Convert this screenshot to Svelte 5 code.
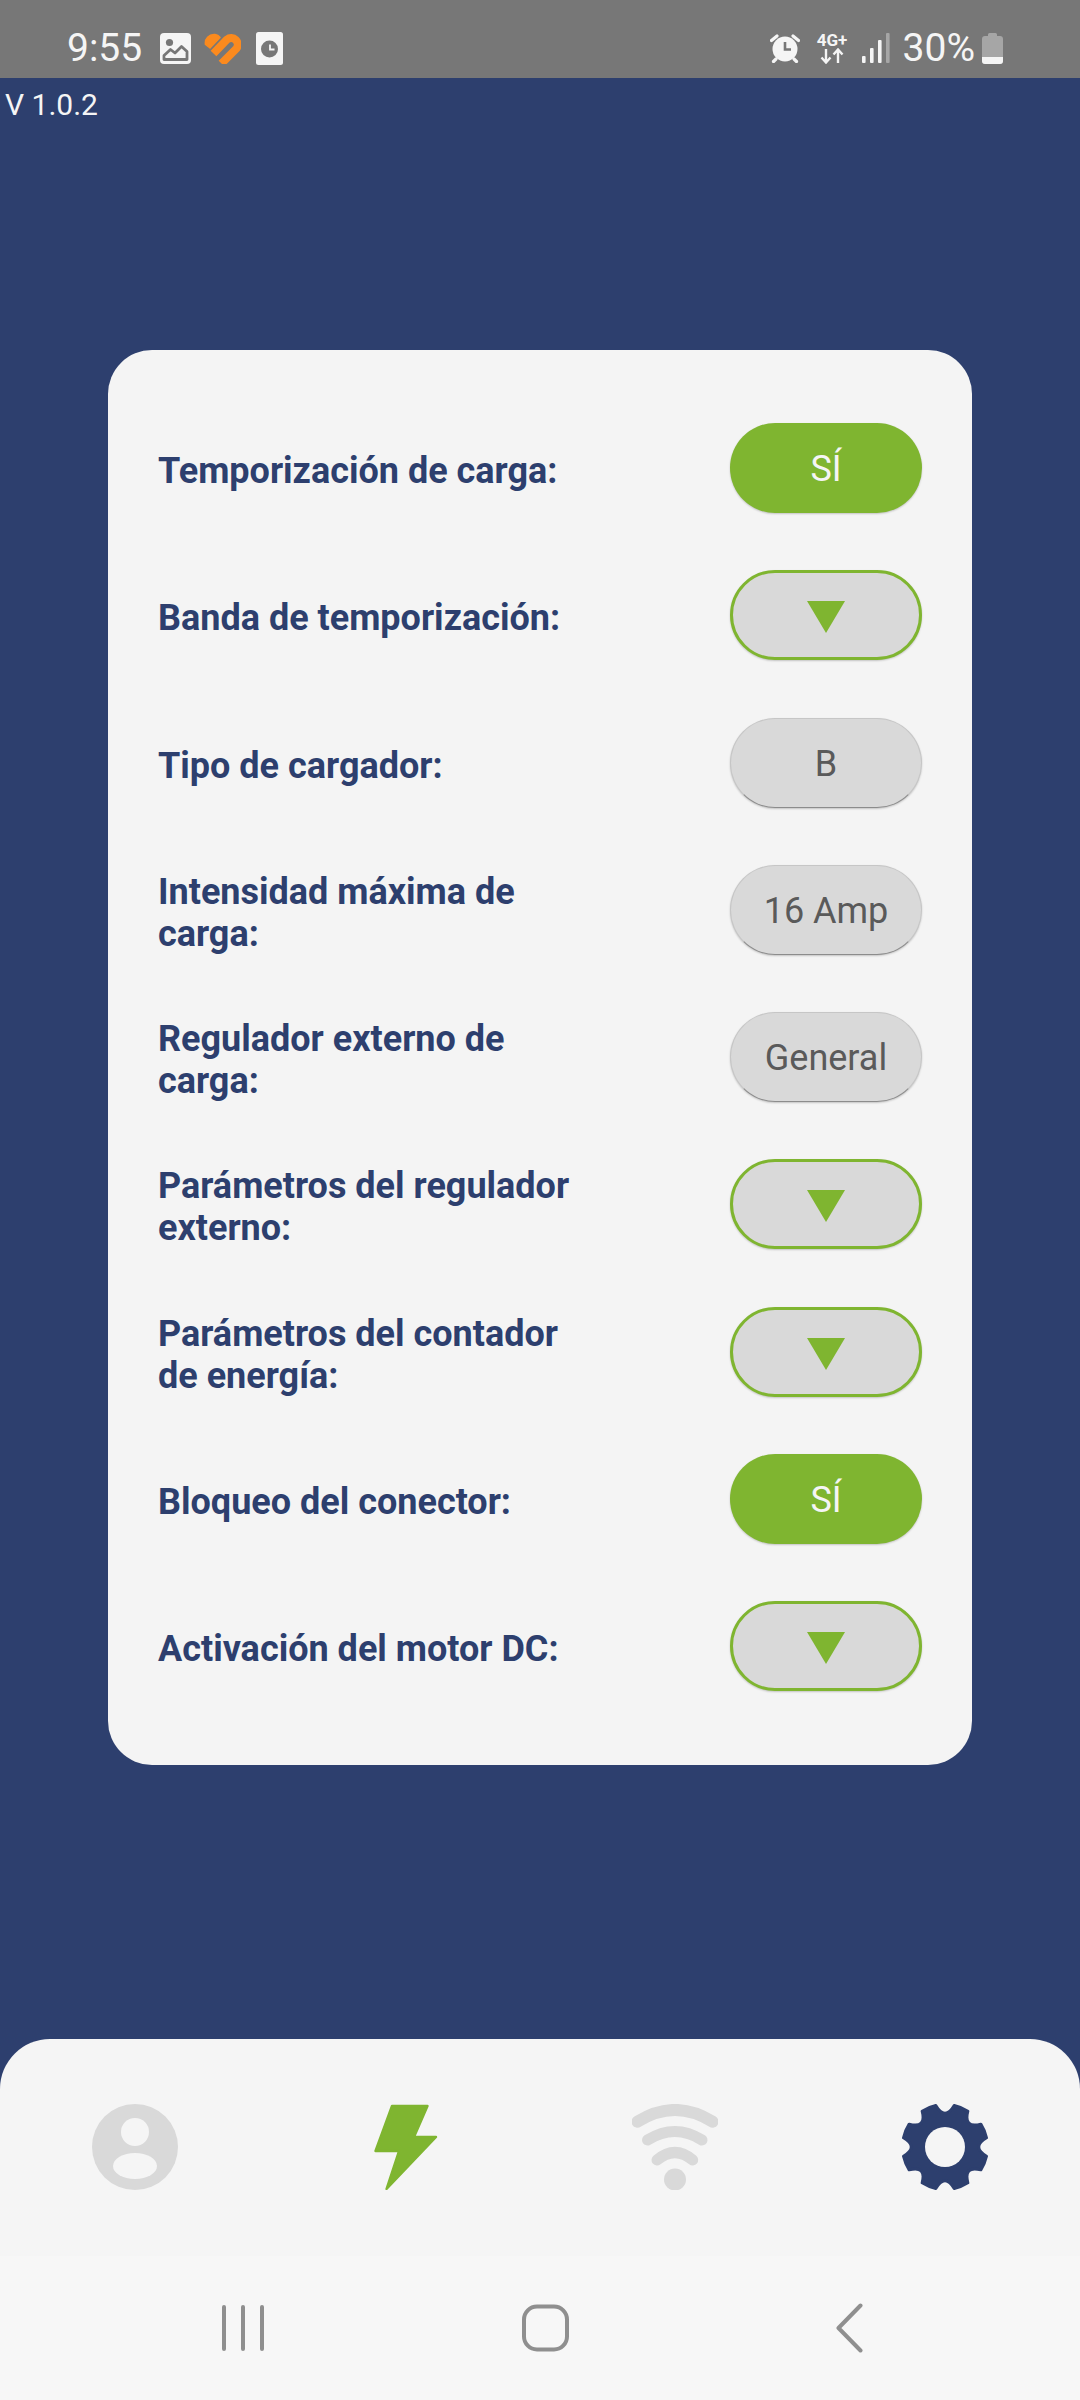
<script lang="ts">
  const rows = [
    { label: 'Temporización de carga:', kind: 'on', text: 'SÍ' },
    { label: 'Banda de temporización:', kind: 'drop' },
    { label: 'Tipo de cargador:', kind: 'off', text: 'B' },
    { label: 'Intensidad máxima de carga:', kind: 'off', text: '16 Amp' },
    { label: 'Regulador externo de carga:', kind: 'off', text: 'General' },
    { label: 'Parámetros del regulador externo:', kind: 'drop' },
    { label: 'Parámetros del contador de energía:', kind: 'drop' },
    { label: 'Bloqueo del conector:', kind: 'on', text: 'SÍ' },
    { label: 'Activación del motor DC:', kind: 'drop' }
  ]

  // 8 lobes, a quarter step off the axes
  function gearPath() {
    const c = 43, R = 42.5, root = 26
    const pt = (r: number, deg: number) => {
      const a = (deg * Math.PI) / 180
      return `${(c + r * Math.cos(a)).toFixed(2)} ${(c + r * Math.sin(a)).toFixed(2)}`
    }
    let d = ''
    for (let i = 0; i < 8; i++) {
      const a = 22.5 + i * 45
      d += `${i ? 'L' : 'M'}${pt(R, a - 10)} A${R} ${R} 0 0 1 ${pt(R, a + 10)} `
      d += `Q${pt(root, a + 22.5)} ${pt(R, a + 35)} `
    }
    return d + 'Z'
  }
  const gear = gearPath()
</script>

<div class="screen">
  <header class="status">
    <span class="time">9:55</span>
    <svg class="ic-image" width="31" height="31" viewBox="0 0 31 31">
      <rect width="31" height="31" rx="4" fill="#f5f5f5"/>
      <circle cx="9.500" cy="9.500" r="3.600" fill="#777"/>
      <path d="M4 26.500V22.500L10.500 16.500 15 20 21.500 13.500 27 18.500V26.500Z" fill="none" stroke="#777" stroke-width="2.800" stroke-linejoin="round"/>
    </svg>
    <svg class="ic-heart" width="37" height="31" viewBox="0 0 37 31">
      <path d="M1.500 11.500C0.500 6 5 1 11 1.500 13 1.700 15 3 16 4.500L6 15Z" fill="#fb8a1e" stroke="#fb8a1e" stroke-width="1.500" stroke-linejoin="round"/>
      <path d="M9.500 20.500L23 6.500A6.600 6.600 0 0 1 32.500 15.500L17.500 30.500" fill="none" stroke="#fb8a1e" stroke-width="8"/>
    </svg>
    <svg class="ic-file" width="27" height="33" viewBox="0 0 27 33">
      <rect width="27" height="33" rx="2.500" fill="#f5f5f5"/>
      <circle cx="13.500" cy="17" r="8.500" fill="#777"/>
      <path d="M14 12.500V17.500H18.500" fill="none" stroke="#f5f5f5" stroke-width="1.800"/>
    </svg>
    <span class="spacer"></span>
    <svg class="ic-alarm" width="30" height="30" viewBox="0 0 30 30">
      <circle cx="15" cy="16" r="12.500" fill="#f5f5f5"/>
      <path d="M15 9V16.500H21" fill="none" stroke="#777" stroke-width="2.600"/>
      <path d="M1.500 7.500L7 3 M28.500 7.500L23 3 M6 26L3.500 28.500 M24 26L26.500 28.500" stroke="#f5f5f5" stroke-width="3.200" stroke-linecap="round"/>
    </svg>
    <div class="net">
      <span class="net-label">4G+</span>
      <svg width="24" height="16" viewBox="0 0 24 16">
        <path d="M6 1V14 M1.500 9.500L6 14.500 10.500 9.500 M18 15V2 M13.500 6.500L18 1.500 22.500 6.500" fill="none" stroke="#f5f5f5" stroke-width="2.400"/>
      </svg>
    </div>
    <svg class="ic-signal" width="28" height="30" viewBox="0 0 28 30">
      <rect x="0" y="23" width="3.600" height="7" rx="1" fill="#f5f5f5"/>
      <rect x="8" y="15" width="3.600" height="15" rx="1" fill="#f5f5f5"/>
      <rect x="16" y="7" width="3.600" height="23" rx="1" fill="#f5f5f5"/>
      <rect x="24" y="0" width="3.600" height="30" rx="1" fill="#a6a6a6"/>
    </svg>
    <span class="pct">30%</span>
    <svg class="ic-battery" width="21" height="31" viewBox="0 0 21 31">
      <path d="M6 3V1.500Q6 0 7.500 0H13.500Q15 0 15 1.500V3H18Q21 3 21 6V28Q21 31 18 31H3Q0 31 0 28V6Q0 3 3 3Z" fill="#a6a6a6"/>
      <path d="M0 24H21V28Q21 31 18 31H3Q0 31 0 28Z" fill="#f5f5f5"/>
    </svg>
  </header>

  <main class="body">
    <div class="version">V 1.0.2</div>
    <section class="card">
      {#each rows as row}
        <div class="row">
          <span class="label">{row.label}</span>
          <div class="pill {row.kind}">
            {#if row.kind === 'drop'}
              <svg class="caret" width="38" height="32" viewBox="0 0 38 32"><path d="M0 0H38L19 32Z" fill="#7fb530"/></svg>
            {:else}
              {row.text}
            {/if}
          </div>
        </div>
      {/each}
    </section>
  </main>

  <nav class="tabs">
    <svg width="86" height="86" viewBox="0 0 86 86">
      <circle cx="43" cy="43" r="43" fill="#d9d9d9"/>
      <circle cx="43" cy="28" r="14" fill="#f5f5f5"/>
      <ellipse cx="43" cy="62" rx="22" ry="13" fill="#f5f5f5"/>
    </svg>
    <svg width="86" height="86" viewBox="0 0 86 86">
      <path d="M30 2H65.500L52 33H74L24.500 85 37 47H13.500Z" fill="#7fb530" stroke="#7fb530" stroke-width="2.400" stroke-linejoin="round"/>
    </svg>
    <svg width="86" height="86" viewBox="0 0 86 86">
      <g fill="none" stroke="#d9d9d9" stroke-linecap="round">
        <path d="M5.500 17.700Q43 -5.700 80.500 17.700" stroke-width="12"/>
        <path d="M15.500 36Q43 19 70 36" stroke-width="11"/>
        <path d="M25 56Q43 41 60.700 56" stroke-width="11"/>
      </g>
      <circle cx="43" cy="75.500" r="11" fill="#d9d9d9"/>
    </svg>
    <svg width="86" height="86" viewBox="0 0 86 86">
      <path d={gear} fill="#2d3f6e" stroke="#2d3f6e" stroke-width="3" stroke-linejoin="round"/>
      <circle cx="43" cy="43" r="20" fill="#f5f5f5"/>
    </svg>
  </nav>

  <footer class="sysnav">
    <svg class="recent" width="46" height="48" viewBox="0 0 46 48">
      <path d="M4 3V45 M23 3V45 M42 3V45" stroke="#8f8f8f" stroke-width="4" stroke-linecap="round"/>
    </svg>
    <svg class="home" width="47" height="48" viewBox="0 0 47 48">
      <rect x="2" y="2.500" width="43" height="43" rx="13" fill="none" stroke="#8f8f8f" stroke-width="4"/>
    </svg>
    <svg class="back" width="27" height="50" viewBox="0 0 27 50">
      <path d="M24.500 2.500L2.500 25 24.500 47.500" fill="none" stroke="#8f8f8f" stroke-width="4" stroke-linecap="round" stroke-linejoin="round"/>
    </svg>
  </footer>
</div>

<style>
  :global(body) {
    margin: 0;
    background: #2d3f6e;
  }
  .screen {
    width: 1080px;
    height: 2400px;
    display: flex;
    flex-direction: column;
    background: #2d3f6e;
    font-family: Roboto, sans-serif;
    overflow: hidden;
  }

  .status {
    height: 78px;
    box-sizing: border-box;
    flex: none;
    display: flex;
    align-items: center;
    padding: 18px 77px 0 67px;
    background: #777;
    color: #f5f5f5;
  }
  .time { font-size: 39px; margin-right: 18px; line-height: 1; }
  .ic-heart { margin-left: 13px; }
  .ic-file { margin-left: 15px; }
  .spacer { flex: 1; }
  .net { margin-left: 16px; width: 33px; display: flex; flex-direction: column; align-items: center; }
  .net-label { font-size: 17px; font-weight: 700; line-height: 16px; white-space: nowrap; }
  .ic-signal { margin-left: 13px; }
  .pct { font-size: 39px; margin-left: 13px; line-height: 1; }
  .ic-battery { margin-left: 7px; }

  .body {
    flex: 1;
    display: flex;
    flex-direction: column;
  }
  .version {
    font-size: 30px;
    line-height: 40px;
    padding: 7px 0 0 5px;
    height: 272px;
    box-sizing: border-box;
    color: #f5f5f5;
  }
  .card {
    width: 864px;
    height: 1415px;
    margin-left: 108px;
    box-sizing: border-box;
    padding: 73px 50px 74px;
    background: #f4f4f4;
    border-radius: 44px;
    display: flex;
    flex-direction: column;
    justify-content: space-between;
  }
  .row {
    height: 90px;
    display: flex;
    align-items: center;
    justify-content: space-between;
  }
  .label {
    width: 430px;
    margin-top: 6px;
    font-size: 36px;
    font-weight: 700;
    line-height: 42px;
    color: #2d3f6e;
  }
  .pill {
    width: 192px;
    height: 90px;
    box-sizing: border-box;
    padding-top: 2px;
    border-radius: 45px;
    display: flex;
    align-items: center;
    justify-content: center;
    font-size: 36px;
    box-shadow: 0 1px 2px rgba(0, 0, 0, 0.2);
  }
  .on { background: #7fb530; color: #f5f5f5; }
  .off {
    background: #d9d9d9;
    color: #5a5a5a;
    border: 1px solid #c6c6c6;
    border-bottom-color: #8c8c8c;
  }
  .drop { background: #d9d9d9; border: 3px solid #7fb530; }
  .caret { margin-top: 2px; }

  .tabs {
    height: 217px;
    flex: none;
    box-sizing: border-box;
    padding-top: 65px;
    display: grid;
    grid-template-columns: repeat(4, 1fr);
    justify-items: center;
    align-items: start;
    background: #f5f5f5;
    border-radius: 50px 50px 0 0;
  }

  .sysnav {
    height: 144px;
    flex: none;
    display: flex;
    align-items: center;
    padding-left: 220px;
    background: #f7f7f7;
  }
  .home { margin-left: 256px; }
  .back { margin-left: 267px; }
</style>
